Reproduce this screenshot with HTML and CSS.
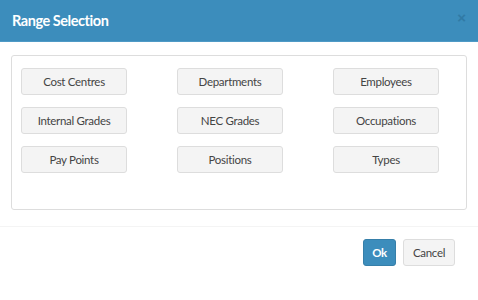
FILE: index.html
```html
<!DOCTYPE html>
<html lang="en">
<head>
    <meta charset="UTF-8">
    <title>Range Selection</title>
    <link rel="stylesheet" href="styles.css">
</head>
<body>

<!-- Modal -->
<div class="modal">
    <div class="modal-header">
        <h4 class="modal-title">Range Selection</h4>
        <button class="close" type="button">&times;</button>
    </div>

    <div class="modal-body">
        <div class="range-box">
            <button class="btn-range">Cost Centres</button>
            <button class="btn-range">Departments</button>
            <button class="btn-range">Employees</button>
            <button class="btn-range">Internal Grades</button>
            <button class="btn-range">NEC Grades</button>
            <button class="btn-range">Occupations</button>
            <button class="btn-range">Pay Points</button>
            <button class="btn-range">Positions</button>
            <button class="btn-range">Types</button>
        </div>
    </div>

    <div class="modal-footer">
        <button class="btn btn-primary">Ok</button>
        <button class="btn btn-default">Cancel</button>
    </div>
</div>

</body>
</html>
```

FILE: styles.css
```css
body {
    margin: 0;
    background-color: #fff;
    font-family: Lato, 'Liberation Sans', sans-serif;
    color: #444;
}

.modal {
    width: 478px;
}

/* Header bleu */
.modal-header {
    display: flex;
    align-items: center;
    justify-content: space-between;
    height: 41px;
    padding: 0 12px;
    background-color: #3c8dbc;
    border-bottom: 1px solid #4f9ac6;
}

.modal-title {
    margin: 0;
    color: #fff;
    font-size: 14.5px;
    font-weight: 700;
    letter-spacing: -0.45px;
}

.close {
    background: none;
    border: none;
    padding: 0;
    margin-top: -6px;
    color: #2a6f97;
    opacity: 0.6;
    font-size: 15px;
    font-weight: 700;
    cursor: pointer;
}

.modal-body {
    padding: 13px 11px 16px 11px;
}

/* Cadre avec les boutons */
.range-box {
    display: grid;
    grid-template-columns: repeat(3, 106px);
    column-gap: 50px;
    row-gap: 12px;
    padding: 12px 9px 36px 9px;
    border: 1px solid #ddd;
    border-radius: 3px;
}

.btn-range {
    height: 27px;
    background-color: #f4f4f4;
    border: 1px solid #ddd;
    border-radius: 3px;
    color: #444;
    font-family: inherit;
    font-size: 11.5px;
    letter-spacing: -0.3px;
    cursor: pointer;
}

.modal-footer {
    display: flex;
    justify-content: flex-end;
    gap: 7px;
    padding: 12px 23px 11px 23px;
    border-top: 1px solid #f4f4f4;
}

.btn {
    height: 27px;
    padding: 0 9px;
    border: 1px solid #ddd;
    border-radius: 3px;
    font-family: inherit;
    font-size: 11.5px;
    letter-spacing: -0.3px;
    cursor: pointer;
}

.btn-primary {
    width: 33px;
    padding: 0;
    background-color: #3c8dbc;
    border-color: #367fa9;
    color: #fff;
    font-weight: 700;
}

.btn-default {
    width: 52px;
    padding: 0;
    background-color: #f4f4f4;
    color: #444;
}
```
